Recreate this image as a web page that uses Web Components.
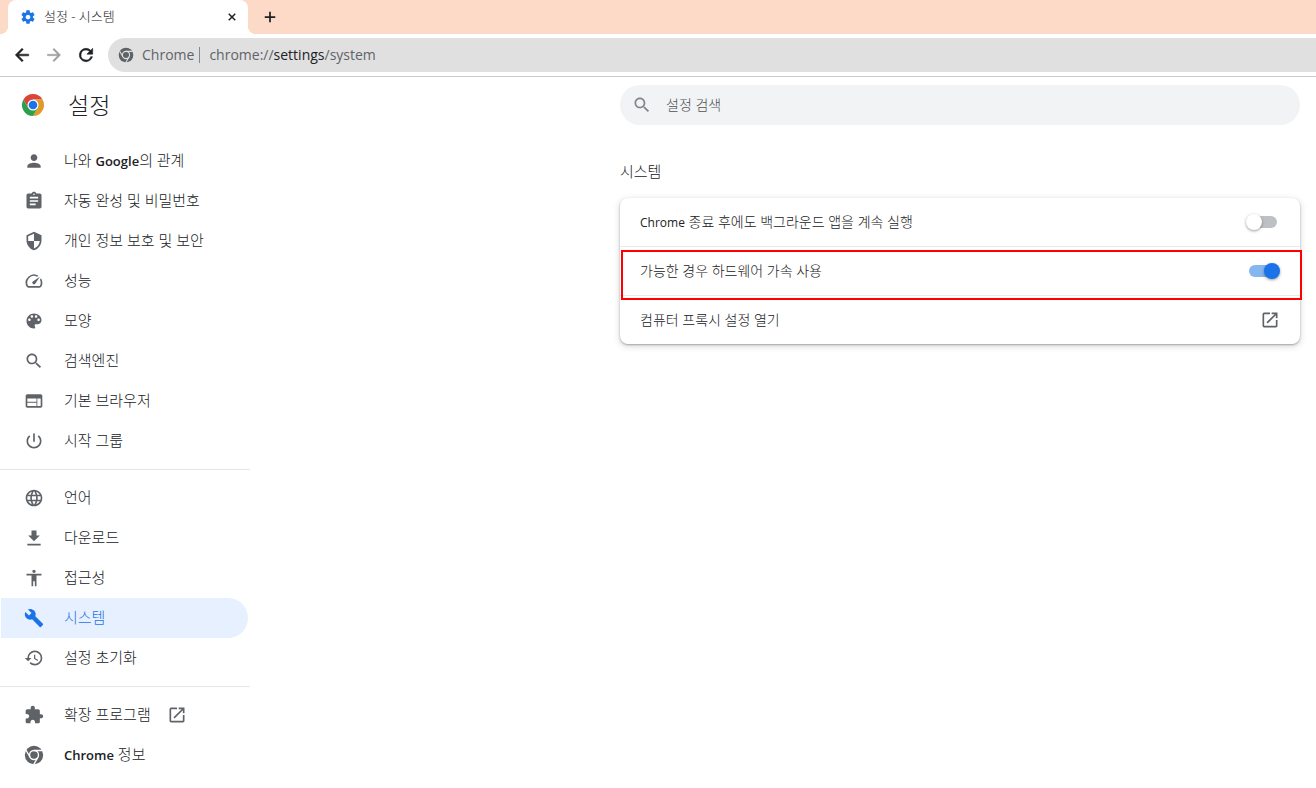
<!DOCTYPE html>
<html lang="ko">
<head>
<meta charset="utf-8">
<title>설정 - 시스템</title>
<style>
  html, body { margin: 0; min-height: 100vh; background: #fff; }
  body { font: 300 14px/20px "Open Sans", "Noto Sans CJK KR", sans-serif; color: #202124; }
</style>
</head>
<body>
<browser-frame></browser-frame>
<settings-page></settings-page>

<script>
const ICONS = {
  person: '<path d="M12 12c2.21 0 4-1.79 4-4s-1.79-4-4-4-4 1.79-4 4 1.79 4 4 4zm0 2c-2.67 0-8 1.34-8 4v2h16v-2c0-2.66-5.33-4-8-4z"/>',
  assignment: '<path d="M19 3h-4.18C14.4 1.84 13.3 1 12 1c-1.3 0-2.4.84-2.82 2H5c-1.1 0-2 .9-2 2v14c0 1.1.9 2 2 2h14c1.1 0 2-.9 2-2V5c0-1.1-.9-2-2-2zm-7 0c.55 0 1 .45 1 1s-.45 1-1 1-1-.45-1-1 .45-1 1-1zm2 14H7v-2h7v2zm3-4H7v-2h10v2zm0-4H7V7h10v2z"/>',
  security: '<path d="M12 1L3 5v6c0 5.55 3.84 10.74 9 12 5.16-1.26 9-6.45 9-12V5l-9-4zm0 10.99h7c-.53 4.12-3.28 7.79-7 8.94V12H5V6.3l7-3.11v8.8z"/>',
  speed: '<path d="M20.38 8.57l-1.23 1.85a8 8 0 0 1-.22 7.58H5.07A8 8 0 0 1 15.58 6.85l1.85-1.23A10 10 0 0 0 3.35 19a2 2 0 0 0 1.72 1h13.85a2 2 0 0 0 1.74-1 10 10 0 0 0-.27-10.44zm-9.79 6.84a2 2 0 0 0 2.83 0l5.66-8.49-8.49 5.66a2 2 0 0 0 0 2.83z"/>',
  palette: '<path d="M12 3c-4.97 0-9 4.03-9 9s4.03 9 9 9c.83 0 1.5-.67 1.5-1.5 0-.39-.15-.74-.39-1.01-.23-.26-.38-.61-.38-.99 0-.83.67-1.5 1.5-1.5H16c2.76 0 5-2.24 5-5 0-4.42-4.03-8-9-8zm-5.5 9c-.83 0-1.5-.67-1.5-1.5S5.67 9 6.5 9 8 9.67 8 10.5 7.33 12 6.5 12zm3-4C8.67 8 8 7.33 8 6.5S8.67 5 9.5 5s1.5.67 1.5 1.5S10.33 8 9.5 8zm5 0c-.83 0-1.5-.67-1.5-1.5S13.67 5 14.5 5s1.5.67 1.5 1.5S15.33 8 14.5 8zm3 4c-.83 0-1.5-.67-1.5-1.5S16.67 9 17.5 9s1.5.67 1.5 1.5-.67 1.5-1.5 1.5z"/>',
  search: '<path d="M15.5 14h-.79l-.28-.27C15.41 12.59 16 11.11 16 9.5 16 5.91 13.09 3 9.5 3S3 5.91 3 9.5 5.91 16 9.5 16c1.61 0 3.09-.59 4.23-1.57l.27.28v.79l5 4.99L20.49 19l-4.99-5zm-6 0C7.01 14 5 11.99 5 9.5S7.01 5 9.5 5 14 7.01 14 9.5 11.99 14 9.5 14z"/>',
  web: '<path d="M20 4H4c-1.1 0-1.99.9-1.99 2L2 18c0 1.1.9 2 2 2h16c1.1 0 2-.9 2-2V6c0-1.1-.9-2-2-2zm-5 14H4v-4h11v4zm0-5H4V9h11v4zm5 5h-4V9h4v9z"/>',
  power: '<path d="M13 3h-2v10h2V3zm4.83 2.17l-1.42 1.42C17.99 7.86 19 9.81 19 12c0 3.87-3.13 7-7 7s-7-3.13-7-7c0-2.19 1.01-4.14 2.58-5.42L6.17 5.17C4.23 6.82 3 9.26 3 12c0 4.97 4.03 9 9 9s9-4.03 9-9c0-2.74-1.23-5.18-3.17-6.83z"/>',
  language: '<path d="M11.99 2C6.47 2 2 6.48 2 12s4.47 10 9.99 10C17.52 22 22 17.52 22 12S17.52 2 11.99 2zm6.93 6h-2.95c-.32-1.25-.78-2.45-1.38-3.56 1.84.63 3.37 1.91 4.33 3.56zM12 4.04c.83 1.2 1.48 2.53 1.91 3.96h-3.82c.43-1.43 1.08-2.76 1.91-3.96zM4.26 14C4.1 13.36 4 12.69 4 12s.1-1.36.26-2h3.38c-.08.66-.14 1.32-.14 2s.06 1.34.14 2H4.26zm.82 2h2.95c.32 1.25.78 2.45 1.38 3.56-1.84-.63-3.37-1.9-4.33-3.56zm2.95-8H5.08c.96-1.66 2.49-2.93 4.33-3.56C8.81 5.55 8.35 6.75 8.03 8zM12 19.96c-.83-1.2-1.48-2.53-1.91-3.96h3.82c-.43 1.43-1.08 2.76-1.91 3.96zM14.34 14H9.66c-.09-.66-.16-1.32-.16-2s.07-1.35.16-2h4.68c.09.65.16 1.32.16 2s-.07 1.34-.16 2zm.25 5.56c.6-1.11 1.06-2.31 1.38-3.56h2.95c-.96 1.65-2.49 2.93-4.33 3.56zM16.36 14c.08-.66.14-1.32.14-2s-.06-1.34-.14-2h3.38c.16.64.26 1.31.26 2s-.1 1.36-.26 2h-3.38z"/>',
  download: '<path d="M19 9h-4V3H9v6H5l7 7 7-7zM4 19v2h16v-2H4z"/>',
  accessibility: '<path d="M12 2c1.1 0 2 .9 2 2s-.9 2-2 2-2-.9-2-2 .9-2 2-2zm9 7h-6v13h-2v-6h-2v6H9V9H3V7h18v2z"/>',
  build: '<path d="M22.7 19l-9.1-9.1c.9-2.3.4-5-1.5-6.9-2-2-5-2.4-7.4-1.3L9 6 6 9 1.6 4.7C.4 7.1.9 10.1 2.9 12.1c1.9 1.9 4.6 2.4 6.9 1.5l9.1 9.1c.4.4 1 .4 1.4 0l2.3-2.3c.5-.4.5-1.1.1-1.4z"/>',
  history: '<path d="M13 3a9 9 0 0 0-9 9H1l3.89 3.89.07.14L9 12H6c0-3.87 3.13-7 7-7s7 3.13 7 7-3.13 7-7 7c-1.93 0-3.68-.79-4.94-2.06l-1.42 1.42A8.95 8.95 0 0 0 13 21a9 9 0 0 0 0-18zm-1 5v5l4.28 2.54.72-1.21-3.5-2.08V8H12z"/>',
  extension: '<path d="M20.5 11H19V7c0-1.1-.9-2-2-2h-4V3.5C13 2.12 11.88 1 10.5 1S8 2.12 8 3.5V5H4c-1.1 0-1.99.9-1.99 2v3.8H3.5c1.49 0 2.7 1.21 2.7 2.7s-1.21 2.7-2.7 2.7H2V20c0 1.1.9 2 2 2h3.8v-1.5c0-1.49 1.21-2.7 2.7-2.7 1.49 0 2.7 1.21 2.7 2.7V22H17c1.1 0 2-.9 2-2v-4h1.5c1.38 0 2.5-1.12 2.5-2.5S21.88 11 20.5 11z"/>',
  launch: '<path d="M19 19H5V5h7V3H5a2 2 0 0 0-2 2v14a2 2 0 0 0 2 2h14c1.1 0 2-.9 2-2v-7h-2v7zM14 3v2h3.59l-9.83 9.83 1.41 1.41L19 6.41V10h2V3h-7z"/>',
  gear: '<path d="M19.43 12.98c.04-.32.07-.64.07-.98s-.03-.66-.07-.98l2.11-1.65c.19-.15.24-.42.12-.64l-2-3.46c-.12-.22-.39-.3-.61-.22l-2.49 1c-.52-.4-1.08-.73-1.69-.98l-.38-2.65C14.46 2.18 14.25 2 14 2h-4c-.25 0-.46.18-.49.42l-.38 2.65c-.61.25-1.17.59-1.69.98l-2.49-1c-.23-.09-.49 0-.61.22l-2 3.46c-.13.22-.07.49.12.64l2.11 1.65c-.04.32-.07.65-.07.98s.03.66.07.98l-2.11 1.65c-.19.15-.24.42-.12.64l2 3.46c.12.22.39.3.61.22l2.49-1c.52.4 1.08.73 1.69.98l.38 2.65c.03.24.24.42.49.42h4c.25 0 .46-.18.49-.42l.38-2.65c.61-.25 1.17-.59 1.69-.98l2.49 1c.23.09.49 0 .61-.22l2-3.46c.12-.22.07-.49-.12-.64l-2.11-1.65zM12 15.5c-1.93 0-3.5-1.57-3.5-3.5s1.57-3.5 3.5-3.5 3.5 1.57 3.5 3.5-1.57 3.5-3.5 3.5z"/>',
  chrome: '<circle cx="12" cy="12" r="11"/><g fill="none" stroke="var(--icon-gap, #fff)" stroke-width="1.6"><circle cx="12" cy="12" r="5.4"/><path d="M12 6.6h10M7.3 14.7l-5-8.7M16.7 14.7l-5 8.7"/></g>',
  logo: '<path fill="#db4437" d="M12 6.5h9.53A11 11 0 0 0 2.47 6.5l4.77 8.25L12 12z"/><path fill="#e0992b" d="M21.53 6.5A11 11 0 0 1 12 23l4.76-8.25L12 12V6.5z"/><path fill="#2f9e4f" d="M2.47 6.5A11 11 0 0 0 12 23l4.76-8.25L12 12l-4.76 2.75z"/><circle cx="12" cy="12" r="5.5" fill="#fff"/><circle cx="12" cy="12" r="4.3" fill="#1a73e8"/>',
  back: '<path d="M20 11H7.83l5.59-5.59L12 4l-8 8 8 8 1.41-1.41L7.83 13H20z" stroke="currentColor" stroke-width=".7"/>',
  forward: '<path d="M12 4l-1.41 1.41L16.17 11H4v2h12.17l-5.58 5.59L12 20l8-8z" stroke="currentColor" stroke-width=".4"/>',
  reload: '<path d="M17.65 6.35A7.96 7.96 0 0 0 12 4a8 8 0 1 0 7.73 10h-2.08A6 6 0 1 1 12 6c1.66 0 3.14.69 4.22 1.78L13 11h7V4z" stroke="currentColor" stroke-width=".7"/>',
  close: '<path d="M5.5 5.5l13 13M18.5 5.5l-13 13" fill="none" stroke="currentColor" stroke-width="3"/>',
  plus: '<path d="M12 3v18M3 12h18" fill="none" stroke="currentColor" stroke-width="3"/>'
};

function define(name, html, setup) {
  const template = document.createElement('template');
  template.innerHTML = html;
  customElements.define(name, class extends HTMLElement {
    constructor() {
      super();
      this.attachShadow({ mode: 'open' }).append(template.content.cloneNode(true));
    }
    connectedCallback() { if (setup) setup(this, this.shadowRoot); }
  });
}

define('ui-icon', `
  <style>
    :host { display: block; flex: none; width: var(--icon-size, 20px); height: var(--icon-size, 20px); }
    svg { display: block; width: 100%; height: 100%; fill: currentColor; }
  </style>
  <svg viewBox="0 0 24 24" aria-hidden="true"></svg>`,
  (el, root) => { root.querySelector('svg').innerHTML = ICONS[el.getAttribute('name')] || ''; });

define('browser-frame', `
  <style>
    :host { display: block; border-bottom: 1px solid #c9cbcb; }
    button { border: 0; padding: 0; background: none; color: inherit; font: inherit; display: flex; align-items: center; }
    .strip { display: flex; align-items: center; height: 34px; padding-left: 8px; background: #fcdac7; }
    .tab { position: relative; box-sizing: border-box; display: flex; align-items: center; width: 240px; height: 34px;
           padding: 0 10px 0 12px; border-radius: 8px 8px 0 0; background: #fff; }
    .tab::before, .tab::after { content: ""; position: absolute; bottom: 0; width: 8px; height: 8px; }
    .tab::before { right: 100%; background: radial-gradient(circle at 0 0, transparent 8px, #fff 8px); }
    .tab::after { left: 100%; background: radial-gradient(circle at 100% 0, transparent 8px, #fff 8px); }
    .title { flex: 1; gap: 8px; font-size: 13px; --icon-size: 16px; }
    .title span { padding-bottom: 2px; }
    .title ui-icon { color: #1a73e8; }
    .close { --icon-size: 12px; }
    .new { margin-left: 15px; --icon-size: 14px; }
    .bar { display: flex; align-items: center; height: 42px; padding-left: 12px; gap: 12px; color: #1f2023; }
    .forward { color: #9b9da0; }
    .omnibox { flex: 1; display: flex; align-items: center; height: 34px; padding-left: 10px;
               border-radius: 17px 0 0 17px; background: #e0e0e0; color: #5f6368; font-weight: 400; --icon-gap: #e0e0e0; }
    .site { gap: 8px; --icon-size: 16px; }
    .rule { width: 1px; height: 16px; margin: 0 9px 0 5px; background: #85888b; }
    .url { flex: 1; outline: 0; white-space: nowrap; }
    b { font-weight: 400; color: #202124; }
  </style>
  <div class="strip" role="tablist">
    <div class="tab">
      <button class="title" role="tab" aria-selected="true"><ui-icon name="gear"></ui-icon><span>설정 - 시스템</span></button>
      <button class="close" aria-label="닫기"><ui-icon name="close"></ui-icon></button>
    </div>
    <button class="new" aria-label="새 탭"><ui-icon name="plus"></ui-icon></button>
  </div>
  <div class="bar">
    <button aria-label="뒤로"><ui-icon name="back"></ui-icon></button>
    <button class="forward" aria-label="앞으로"><ui-icon name="forward"></ui-icon></button>
    <button aria-label="새로고침"><ui-icon name="reload"></ui-icon></button>
    <div class="omnibox">
      <button class="site"><ui-icon name="chrome"></ui-icon><span>Chrome</span></button>
      <span class="rule"></span>
      <div class="url" role="textbox" contenteditable="true" spellcheck="false" aria-label="주소창">chrome://<b>settings</b>/system</div>
    </div>
  </div>`);

define('nav-link', `
  <style>
    :host { display: block; }
    a { display: flex; align-items: center; height: 40px; margin: 0 18px 0 1px; padding-left: 23px;
        border-radius: 0 20px 20px 0; color: #202124; font-size: 15px; text-decoration: none; }
    .label { margin-left: 20px; padding-bottom: 2px; }
    ui-icon { color: #5f6368; }
    .external { margin-left: 16px; }
    :host([active]) a { background: #e7f0fe; color: #1a73e8; }
    :host([active]) ui-icon { color: #1a73e8; }
    :host(:not([external])) .external { display: none; }
    ::slotted(span) { font-size: 13px; font-weight: 600; }
  </style>
  <a href="#"><ui-icon class="icon"></ui-icon><span class="label"><slot></slot></span><ui-icon class="external" name="launch"></ui-icon></a>`,
  (el, root) => {
    const icon = root.querySelector('.icon');
    icon.setAttribute('name', el.getAttribute('icon'));
    icon.shadowRoot.querySelector('svg').innerHTML = ICONS[el.getAttribute('icon')];
    if (el.hasAttribute('active')) root.querySelector('a').setAttribute('aria-current', 'page');
  });

define('settings-menu', `
  <style>
    :host { display: block; }
    hr { width: 250px; height: 1px; margin: 8px 0; border: 0; background: #e6e7e9; }
  </style>
  <nav aria-label="설정">
    <nav-link icon="person">나와 <span>Google</span>의 관계</nav-link>
    <nav-link icon="assignment">자동 완성 및 비밀번호</nav-link>
    <nav-link icon="security">개인 정보 보호 및 보안</nav-link>
    <nav-link icon="speed">성능</nav-link>
    <nav-link icon="palette">모양</nav-link>
    <nav-link icon="search">검색엔진</nav-link>
    <nav-link icon="web">기본 브라우저</nav-link>
    <nav-link icon="power">시작 그룹</nav-link>
    <hr>
    <nav-link icon="language">언어</nav-link>
    <nav-link icon="download">다운로드</nav-link>
    <nav-link icon="accessibility">접근성</nav-link>
    <nav-link icon="build" active>시스템</nav-link>
    <nav-link icon="history">설정 초기화</nav-link>
    <hr>
    <nav-link icon="extension" external>확장 프로그램</nav-link>
    <nav-link icon="chrome"><span>Chrome</span> 정보</nav-link>
  </nav>`);

define('search-field', `
  <style>
    :host { display: flex; align-items: center; gap: 14px; height: 40px; padding: 0 12px; border-radius: 20px; background: #f1f3f4; }
    ui-icon { color: #80868b; }
    input { flex: 1; min-width: 0; padding: 0; border: 0; outline: 0; background: none; color: #202124; font: inherit; }
    input::placeholder { color: #4d5156; opacity: 1; }
  </style>
  <ui-icon name="search"></ui-icon>
  <input type="search" placeholder="설정 검색" aria-label="설정 검색">`);

define('toggle-row', `
  <style>
    :host { display: block; position: relative; }
    label { display: flex; align-items: center; justify-content: space-between; height: 48px; padding: 0 20px; }
    input { appearance: none; position: relative; flex: none; width: 34px; height: 16px; margin: 0; }
    input::before { content: ""; position: absolute; inset: 2px 3px; border-radius: 6px; background: #bdc1c6; }
    input::after { content: ""; position: absolute; top: 0; left: 0; width: 16px; height: 16px; border-radius: 50%;
                   background: #fff; box-shadow: 0 1px 3px rgba(0,0,0,.4); }
    input:checked::before { background: #84b7f0; }
    input:checked::after { left: auto; right: 0; background: #1a73e8; }
    :host([highlight])::after { content: ""; position: absolute; inset: 3px -2px -5px 1px; border: 2px solid #ff0000;
                   pointer-events: none; z-index: 1; }
    ::slotted(span) { font-size: 12px; font-weight: 400; }
  </style>
  <label><span><slot></slot></span><input type="checkbox" role="switch"></label>`,
  (el, root) => { root.querySelector('input').checked = el.hasAttribute('checked'); });

define('link-row', `
  <style>
    :host { display: block; }
    a { display: flex; align-items: center; justify-content: space-between; height: 48px; padding: 0 20px; color: inherit; text-decoration: none; }
    ui-icon { color: #5f6368; }
  </style>
  <a href="#"><span><slot></slot></span><ui-icon name="launch"></ui-icon></a>`);

define('settings-card', `
  <style>
    :host { display: block; border-radius: 8px; background: #fff;
            box-shadow: 0 1px 2px rgba(60,64,67,.4), 0 2px 6px 1px rgba(60,64,67,.16); }
    ::slotted(:not(:first-child)) { border-top: 1px solid #e8eaed; }
  </style>
  <slot></slot>`);

define('settings-page', `
  <style>
    :host { display: grid; grid-template-columns: 266px minmax(0, 680px); justify-content: space-between; padding: 8px 16px 0 0; }
    header { display: flex; align-items: center; gap: 23px; height: 40px; padding-left: 21px; margin-bottom: 16px; --icon-size: 24px; }
    h1 { margin: 0; font-size: 23px; line-height: 32px; font-weight: 300; }
    h2 { margin: 36px 0 16px; font-size: 15px; line-height: 21px; font-weight: 300; }
  </style>
  <aside>
    <header><ui-icon name="logo"></ui-icon><h1>설정</h1></header>
    <settings-menu></settings-menu>
  </aside>
  <main>
    <search-field></search-field>
    <h2>시스템</h2>
    <settings-card>
      <toggle-row><span>Chrome</span> 종료 후에도 백그라운드 앱을 계속 실행</toggle-row>
      <toggle-row checked highlight>가능한 경우 하드웨어 가속 사용</toggle-row>
      <link-row>컴퓨터 프록시 설정 열기</link-row>
    </settings-card>
  </main>`);
</script>
</body>
</html>
